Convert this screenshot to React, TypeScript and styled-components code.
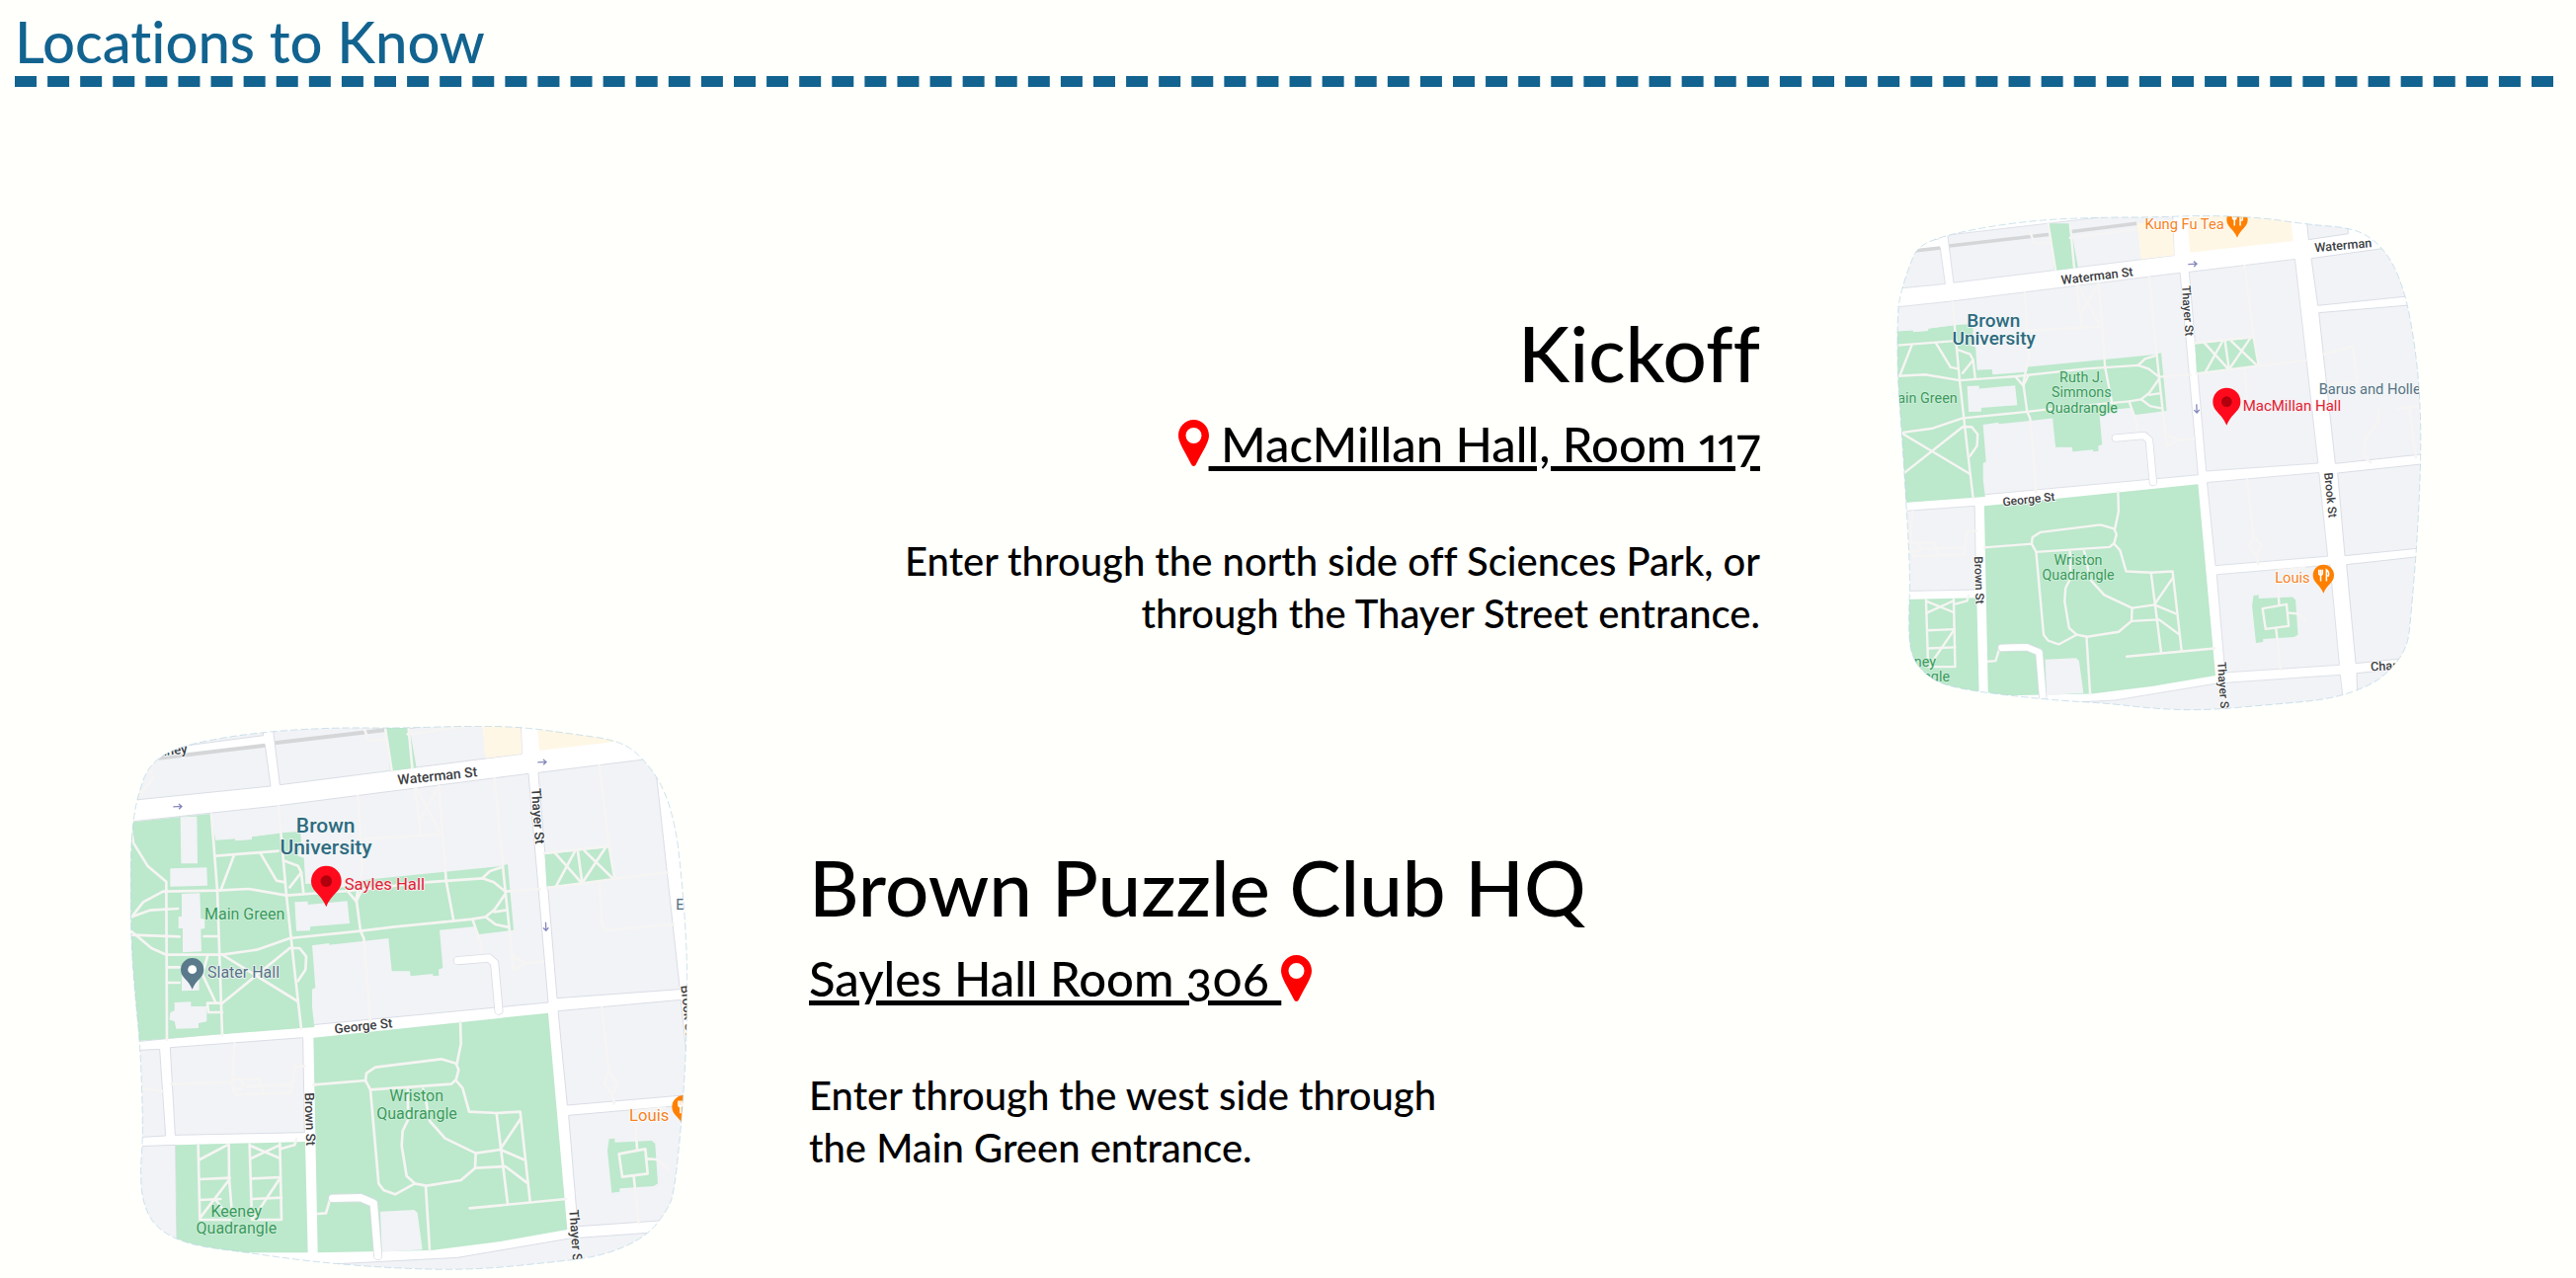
import React from "react";
import styled, { createGlobalStyle } from "styled-components";

type Point = [number, number];
type Side = "left" | "right";

const GlobalStyle = createGlobalStyle`
  body {
    margin: 0;
    background: #fffffc;
    color: #000;
    font-family: Lato, "Open Sans", sans-serif;
    font-variant-ligatures: none;
  }
`;

const Page = styled.main`
  padding: 12px 23px 0 15px;
`;

const SectionTitle = styled.h1`
  margin: 0 0 90px;
  padding-bottom: 5px;
  border-bottom: 11px dashed #12638f;
  color: #12638f;
  font-size: 58px;
  line-height: 60px;
  font-weight: 500;
`;

const Locations = styled.div`
  display: flex;
  flex-direction: column;
  gap: 15px;
`;

const Location = styled.section<{ $side: Side }>`
  display: flex;
  flex-direction: ${(p) => (p.$side === "right" ? "row-reverse" : "row")};
  align-items: center;
  gap: ${(p) => (p.$side === "right" ? "138px" : "123px")};
  padding: ${(p) => (p.$side === "right" ? "40px 133px 0 0" : "0 0 0 117px")};
  text-align: ${(p) => p.$side};
`;

const Details = styled.div<{ $measure: number }>`
  margin-top: 18px;
  max-width: ${(p) => p.$measure}px;
`;

const Name = styled.h2`
  margin: 0 0 6px;
  font-size: 78px;
  line-height: 96px;
  font-weight: 500;
  white-space: nowrap;
`;

const Place = styled.a`
  display: inline-flex;
  align-items: center;
  color: inherit;
  font-size: 49px;
  line-height: 76px;
  font-weight: 500;
  text-decoration: none;
  font-variant-numeric: oldstyle-nums proportional-nums;
`;

const PlaceText = styled.span`
  white-space: pre;
  text-decoration: underline;
  text-decoration-thickness: 5px;
  text-underline-offset: 4px;
`;

const PinIcon = styled.svg`
  width: 31px;
  height: 47px;
  flex: none;
`;

const Directions = styled.p`
  margin: 55px 0 0;
  font-size: 40px;
  line-height: 53px;
  font-weight: 500;
`;

const MapPicture = styled.svg`
  flex: none;
  font-family: Roboto, sans-serif;
  text-anchor: middle;

  .block { fill: #f1f3f6; stroke: #dadde6; stroke-width: 3; }
  .green { fill: #bce8cc; }
  .shop { fill: #fff7e6; }
  .walk { fill: none; stroke: #f6f5f3; stroke-width: 8; stroke-linejoin: round; stroke-linecap: round; }
  .curb { fill: none; stroke: #dadde6; stroke-width: 27; stroke-linejoin: round; stroke-linecap: round; }
  .drive { fill: none; stroke: #fff; stroke-width: 22; stroke-linejoin: round; stroke-linecap: round; }
  .edge { fill: none; stroke: #b4d3e2; stroke-width: 2; stroke-dasharray: 22 9; }
  text { paint-order: stroke; stroke-width: 5px; stroke-linejoin: round; }
  .road { fill: #3c4043; stroke: #fff; font-weight: 500; }
  .campus { fill: #2f6b80; stroke: #f1f7f6; font-weight: 500; }
  .park { fill: #3a9a5c; stroke: #d0efdb; }
  .place { fill: #567283; stroke: #f3f6f8; }
  .chosen { fill: #dd2436; stroke: #fbeef0; }
  .food { fill: #f5821f; stroke: #fff; }
`;

const smooth = (pts: Point[]) => {
  const mid = (a: Point, b: Point) => `${(a[0] + b[0]) / 2} ${(a[1] + b[1]) / 2}`;
  const n = pts.length;
  return (
    `M${mid(pts[n - 1], pts[0])}` +
    pts.map((p, i) => `Q${p[0]} ${p[1]} ${mid(p, pts[(i + 1) % n])}`).join("") +
    "Z"
  );
};

const kickoffOutline: Point[] = [
  [63, 350], [73, 290], [98, 210], [125, 148], [205, 116], [350, 86], [520, 66], [700, 60],
  [840, 60], [1000, 54], [1170, 61], [1310, 82], [1440, 92], [1508, 125], [1565, 190],
  [1608, 300], [1635, 450], [1650, 600], [1654, 780], [1642, 1040], [1622, 1280], [1612, 1365],
  [1562, 1435], [1500, 1482], [1380, 1524], [1200, 1540], [1000, 1558], [840, 1553],
  [700, 1536], [520, 1526], [230, 1492], [145, 1450], [101, 1385], [97, 1280], [102, 1150],
  [90, 930], [75, 700], [63, 540],
];

const hqOutline: Point[] = [
  [74, 335], [88, 260], [120, 165], [200, 112], [350, 79], [520, 59], [700, 50], [870, 52],
  [1100, 45], [1250, 48], [1400, 68], [1555, 90], [1625, 145], [1685, 230], [1722, 350],
  [1740, 500], [1755, 700], [1758, 860], [1753, 1050], [1740, 1250], [1718, 1460], [1698, 1515],
  [1632, 1598], [1500, 1656], [1330, 1676], [1100, 1698], [870, 1693], [620, 1673], [400, 1642],
  [245, 1622], [143, 1572], [102, 1490], [96, 1390], [105, 1290], [97, 1030], [80, 860],
  [68, 700], [66, 450],
];

const cityBlocks = [
  "0,160 152,140 475,103 492,228 100,268 0,280",
  "180,112 470,74 465,30 180,60",
  "500,60 1250,-30 1255,130 520,224",
  "0,345 75,335 510,288 1275,190 1335,885 95,1003 0,1010",
  "1305,187 1658,143 1735,845 1362,872",
  "0,1035 155,1027 173,1290 0,1300",
  "187,1022 590,992 595,1280 202,1288",
  "0,1325 203,1318 208,1722 0,1722",
  "1365,911 1738,877 1767,1165 1393,1197",
  "1397,1228 1775,1195 1806,1539 1425,1565",
  "870,1670 1060,1660 1400,1602 1809,1573 1830,1760 600,1760 600,1684",
];

const lawns = [
  "838,20 908,20 935,172 855,182",
  "0,345 75,337 310,312 325,392 385,388 385,394 435,390 435,382 520,370 582,366 585,392 575,440 593,446 598,525 648,522 650,540 763,531 768,514 1185,472 1212,465 1230,665 1125,678 1108,655 1005,665 1015,780 1002,785 1003,803 985,805 985,798 917,805 915,790 860,790 850,690 790,697 670,710 670,705 618,712 628,840 618,845 618,900 625,960 95,1001 0,1008",
  "1325,435 1520,415 1537,510 1330,533",
  "203,1318 597,1308 605,1645 208,1645",
  "622,992 1335,917 1393,1575 1185,1612 980,1638 635,1645",
  "1520,1300 1537,1298 1537,1310 1650,1305 1660,1315 1668,1435 1655,1443 1552,1450 1552,1460 1528,1463 1515,1335",
];

const shops = ["1132,20 1250,10 1255,130 1145,143", "1298,0 1308,120 1652,80 1640,-30"];

const buildings = [
  "218,322 268,320 270,463 220,463",
  "187,478 298,475 300,530 187,533",
  "222,555 277,553 280,630 292,632 292,660 280,662 282,730 225,733 225,660 212,660 212,625 222,623",
  "222,850 275,848 275,800 222,800",
  "200,885 250,883 250,897 298,897 298,943 273,948 273,963 205,965 200,942 185,938 187,915 200,910",
  "318,314 512,292 518,371 435,381 435,389 385,393 385,387 325,391",
  "565,580 605,578 605,588 725,577 732,645 612,655 612,667 570,668",
  "825,1520 928,1515 938,1524 953,1636 830,1643",
];

const walks = [
  "835,20 860,182", "908,20 922,172", "775,50 790,90 840,85", "908,70 1130,40",
  "90,260 135,205 125,170",
  "65,340 75,400 118,470 175,518 177,998",
  "70,625 105,580 165,548 330,545 425,540 540,560 730,546 960,520 1135,508 1170,520 1205,548",
  "1135,508 1158,486 1195,474",
  "70,625 125,605 210,600",
  "70,670 130,720 175,740 345,740 450,725 550,690 765,668 870,655 1105,632 1145,625 1172,603 1205,555",
  "1145,625 1175,648 1212,656", "1172,610 1205,605",
  "70,680 215,685", "290,684 330,684",
  "312,314 330,545 345,985",
  "325,440 515,425", "380,440 340,545", "460,430 510,515 535,520",
  "516,290 540,560 565,790 585,965",
  "535,455 575,470 585,490 592,555", "585,490 550,535",
  "345,740 575,882", "550,720 345,887",
  "550,720 580,720 600,745 598,785 575,820",
  "178,778 215,778", "178,825 215,825", "300,745 285,800 325,885",
  "345,887 300,887 303,915 345,915",
  "757,258 770,480 752,570 765,668 775,690 795,945", "725,546 752,578 768,545",
  "775,388 1010,375", "930,235 948,375", "935,235 1008,372", "1003,228 948,325",
  "1003,228 1025,515 1047,632", "1172,205 1200,500 1205,548 1310,540",
  "1205,548 1230,785 1270,765 1225,745", "1270,765 1320,760",
  "1105,632 1130,705 1130,745",
  "1490,165 1520,410 1537,510", "1323,432 1520,410", "1330,537 1537,510 1697,490",
  "1355,430 1435,520", "1415,428 1360,530", "1425,426 1438,520", "1445,424 1530,507", "1510,413 1440,520",
  "1490,520 1500,655 1515,665 1715,648",
  "190,1133 375,1128 385,1165 555,1160 565,1080 595,1078", "383,1010 375,1128",
  "375,1118 455,1118 470,1162", "400,1120 410,1135 400,1148 380,1148", "415,1140 555,1135",
  "90,1143 165,1155",
  "272,1320 277,1545 370,1545", "365,1317 366,1420 375,1530", "277,1362 360,1318",
  "277,1422 368,1418", "277,1485 340,1482", "365,1425 277,1540", "325,1485 345,1510",
  "428,1315 435,1545 525,1545 520,1312", "430,1320 520,1358", "430,1360 520,1318",
  "522,1330 565,1318 570,1300", "435,1420 522,1416", "435,1482 525,1478", "520,1420 440,1540",
  "622,1135 780,1122 783,1100 810,1082 1010,1057 1055,1070 1063,1090 1055,1120 1040,1133 870,1145 795,1150 780,1122",
  "1068,942 1070,1010 1058,1070",
  "1055,1122 1075,1145 1095,1217 1178,1221 1250,1217 1280,1490", "1178,1221 1212,1497",
  "1097,1510 1390,1482", "1250,1240 1190,1330", "1115,1343 1190,1332 1260,1362",
  "1113,1388 1205,1383 1270,1432",
  "795,1150 820,1435 835,1455 870,1468 930,1435 965,1442 1070,1425 1113,1388 1115,1343 1022,1298 975,1245 960,1165 955,1148",
  "930,1435 905,1412 890,1320 893,1275 910,1240 908,1150",
  "963,1442 975,1638", "635,1527 660,1525 672,1485",
  "1498,900 1520,1095 1505,1130 1530,1165 1545,1130 1520,1095", "1530,1165 1535,1192",
  "1605,1330 1598,1215 1690,1205", "1550,1345 1630,1330 1637,1405 1560,1415 1550,1345",
  "1595,1415 1610,1555", "1637,1360 1665,1362 1697,1390",
];

const driveways = ["1060,758 1155,750 1172,765 1185,910", "680,1480 765,1478 805,1495 818,1655"];

const eastBlocks = [
  "1303,40 1430,40 1432,110 1312,128",
  "1320,185 1680,135 1690,292 1340,328",
  "1343,350 1700,320 1700,775 1393,808",
  "1400,837 1700,805 1700,1060 1422,1088",
  "1427,1115 1700,1085 1700,1390 1455,1415",
  "1458,1445 1700,1420 1700,1600 1462,1600",
];

const eastWalks = [
  "1360,475 1445,452 1460,560 1380,565",
  "1525,645 1525,680 1485,730 1480,785 1500,805",
  "1580,640 1660,632", "1618,640 1638,790",
];

const shapes = (list: string[], className: string) =>
  list.map((points) => <polygon key={points} points={points} className={className} />);

const lines = (list: string[], className: string) =>
  list.map((points) => <polyline key={points} points={points} className={className} />);

const Streets = () => (
  <>
    {shapes(cityBlocks, "block")}
    <path d="M152 143L475 104M505 97L835 58L1130 20" fill="none" stroke="#d5d6d8" strokeWidth="12" />
    {shapes(shops, "shop")}
    {shapes(lawns, "green")}
    {buildings.map((points) => (
      <polygon key={points} points={points} fill="#f1f3f6" />
    ))}
    {lines(walks, "walk")}
    {lines(driveways, "curb")}
    {lines(driveways, "drive")}
  </>
);

type LabelProps = {
  x: number;
  y: number;
  size: number;
  kind: string;
  turn?: number;
  anchor?: "start" | "middle" | "end";
  children: string;
};

const Label = ({ x, y, size, kind, turn = 0, anchor = "middle", children }: LabelProps) => (
  <text
    className={kind}
    fontSize={size}
    textAnchor={anchor}
    transform={`translate(${x} ${y}) rotate(${turn})`}
  >
    {children}
  </text>
);

type MarkerProps = { x: number; y: number; width: number; color: string; dot?: string; food?: boolean };

const Marker = ({ x, y, width, color, dot, food }: MarkerProps) => (
  <g transform={`translate(${x} ${y}) scale(${width / 84})`}>
    <path d="M0 0C-15 -38 -42 -42 -42 -72A42 42 0 0 1 42 -72C42 -42 15 -38 0 0Z" fill={color} />
    {dot && <circle cy="-72" r="16" fill={dot} />}
    {food && (
      <path
        d="M-18 -94V-80Q-18 -72 -11 -72Q-4 -72 -4 -80V-94M-11 -94V-48M12 -48V-94Q24 -86 20 -70H12"
        fill="none"
        stroke="#fff"
        strokeWidth="6"
      />
    )}
  </g>
);

const Arrow = ({ x, y, turn }: { x: number; y: number; turn: number }) => (
  <path
    d="M-14 0H12M3 -8L12 0L3 8"
    transform={`translate(${x} ${y}) rotate(${turn})`}
    fill="none"
    stroke="#8688bd"
    strokeWidth="4"
  />
);

const KickoffMap = () => (
  <MapPicture viewBox="60 54 1596 1506" width="532" height="502" role="img" aria-label="Map of MacMillan Hall">
    <clipPath id="kickoff-outline">
      <path d={smooth(kickoffOutline)} />
    </clipPath>
    <g clipPath="url(#kickoff-outline)">
      <rect width="1740" height="1680" fill="#fff" />
      <g transform="translate(-240 61) scale(0.911 0.883)">
        <Streets />
      </g>
      {shapes(eastBlocks, "block")}
      {lines(eastWalks, "walk")}
      <Arrow x={960} y={202} turn={-3} />
      <Arrow x={972} y={642} turn={88} />
      <Label x={1055} y={95} size={44} kind="food" anchor="end">Kung Fu Tea</Label>
      <Marker x={1095} y={122} width={64} color="#ff8000" food />
      <Label x={671} y={251} size={38} kind="road" turn={-7}>Waterman St</Label>
      <Label x={1418} y={158} size={38} kind="road" turn={-5}>Waterman</Label>
      <Label x={932} y={345} size={36} kind="road" turn={86}>Thayer St</Label>
      <Label x={355} y={392} size={57} kind="campus">Brown</Label>
      <Label x={356} y={448} size={57} kind="campus">University</Label>
      <Label x={245} y={623} size={43} kind="park" anchor="end">Main Green</Label>
      <Label x={622} y={561} size={43} kind="park">Ruth J.</Label>
      <Label x={622} y={607} size={43} kind="park">Simmons</Label>
      <Label x={622} y={653} size={43} kind="park">Quadrangle</Label>
      <Label x={1343} y={597} size={44} kind="place" anchor="start">Barus and Holley</Label>
      <Marker x={1063} y={692} width={84} color="#ff0a1c" dot="#b1000d" />
      <Label x={1112} y={648} size={45} kind="chosen" anchor="start">MacMillan Hall</Label>
      <Label x={463} y={929} size={36} kind="road" turn={-6}>George St</Label>
      <Label x={299} y={1163} size={36} kind="road" turn={88}>Brown St</Label>
      <Label x={612} y={1116} size={43} kind="park">Wriston</Label>
      <Label x={612} y={1161} size={43} kind="park">Quadrangle</Label>
      <Label x={180} y={1426} size={43} kind="park" anchor="end">Keeney</Label>
      <Label x={222} y={1469} size={43} kind="park" anchor="end">Quadrangle</Label>
      <Label x={1316} y={1171} size={44} kind="food" anchor="end">Louis</Label>
      <Marker x={1357} y={1202} width={64} color="#ff8000" food />
      <Label x={1366} y={905} size={36} kind="road" turn={84}>Brook St</Label>
      <Label x={1040} y={1488} size={36} kind="road" turn={86}>Thayer St</Label>
      <Label x={1501} y={1438} size={38} kind="road" anchor="start" turn={-3}>Charlesfield St</Label>
    </g>
    <path d={smooth(kickoffOutline)} className="edge" />
  </MapPicture>
);

const HeadquartersMap = () => (
  <MapPicture viewBox="66 45 1692 1653" width="564" height="551" role="img" aria-label="Map of Sayles Hall">
    <clipPath id="hq-outline">
      <path d={smooth(hqOutline)} />
    </clipPath>
    <g clipPath="url(#hq-outline)">
      <rect width="1830" height="1722" fill="#fff" />
      <Streets />
      <Arrow x={210} y={290} turn={-3} />
      <Arrow x={1317} y={155} turn={-3} />
      <Arrow x={1328} y={655} turn={88} />
      <Label x={240} y={128} size={40} kind="road" turn={-6} anchor="end">Olney</Label>
      <Label x={1000} y={211} size={42} kind="road" turn={-6}>Waterman St</Label>
      <Label x={1290} y={320} size={40} kind="road" turn={86}>Thayer St</Label>
      <Label x={659} y={370} size={63} kind="campus">Brown</Label>
      <Label x={660} y={434} size={63} kind="campus">University</Label>
      <Marker x={661} y={595} width={92} color="#ff0a1c" dot="#b1000d" />
      <Label x={716} y={542} size={50} kind="chosen" anchor="start">Sayles Hall</Label>
      <Label x={413} y={632} size={48} kind="park">Main Green</Label>
      <Marker x={254} y={845} width={70} color="#5a7a8c" dot="#fff" />
      <Label x={300} y={809} size={48} kind="place" anchor="start">Slater Hall</Label>
      <Label x={775} y={970} size={40} kind="road" turn={-6}>George St</Label>
      <Label x={598} y={1240} size={40} kind="road" turn={88}>Brown St</Label>
      <Label x={935} y={1186} size={48} kind="park">Wriston</Label>
      <Label x={936} y={1240} size={48} kind="park">Quadrangle</Label>
      <Label x={388} y={1537} size={48} kind="park">Keeney</Label>
      <Label x={388} y={1588} size={48} kind="park">Quadrangle</Label>
      <Label x={1702} y={1246} size={50} kind="food" anchor="end">Louis</Label>
      <Marker x={1746} y={1262} width={70} color="#ff8000" food />
      <Label x={1405} y={1600} size={40} kind="road" turn={86}>Thayer St</Label>
      <Label x={1723} y={602} size={43} kind="place" anchor="start">E</Label>
      <Label x={1746} y={910} size={40} kind="road" turn={84}>Brook St</Label>
    </g>
    <path d={smooth(hqOutline)} className="edge" />
  </MapPicture>
);

const Pin = () => (
  <PinIcon viewBox="0 0 31 47" aria-hidden="true">
    <path
      fillRule="evenodd"
      fill="#f00"
      d="M15.500 0C7 0 0 7 0 16C0 23 6 31 13 45C14 47.500 17 47.500 18 45C25 31 31 23 31 16C31 7 24 0 15.500 0ZM15.500 8A8 8 0 1 1 15.500 24A8 8 0 1 1 15.500 8Z"
    />
  </PinIcon>
);

export default function App() {
  return (
    <>
      <GlobalStyle />
      <Page>
        <SectionTitle>Locations to Know</SectionTitle>
        <Locations>
          <Location $side="right">
            <KickoffMap />
            <Details $measure={900}>
              <Name>Kickoff</Name>
              <Place href="#macmillan-hall">
                <Pin />
                <PlaceText> MacMillan Hall, Room 117</PlaceText>
              </Place>
              <Directions>
                Enter through the north side off Sciences Park, or through the Thayer Street entrance.
              </Directions>
            </Details>
          </Location>
          <Location $side="left">
            <HeadquartersMap />
            <Details $measure={690}>
              <Name>Brown Puzzle Club HQ</Name>
              <Place href="#sayles-hall">
                <PlaceText>Sayles Hall Room 306 </PlaceText>
                <Pin />
              </Place>
              <Directions>Enter through the west side through the Main Green entrance.</Directions>
            </Details>
          </Location>
        </Locations>
      </Page>
    </>
  );
}
